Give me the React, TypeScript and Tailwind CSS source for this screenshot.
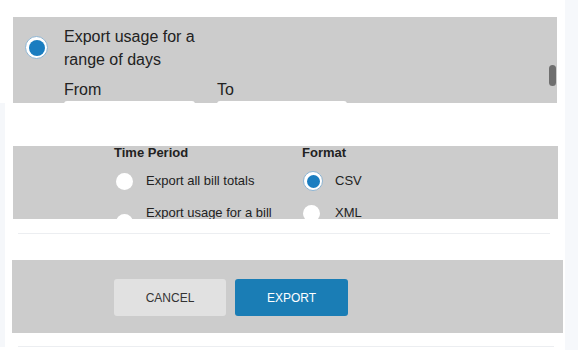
import React from "react";

function SelectedRadio({ size }: { size: "lg" | "sm" }) {
  return size === "lg" ? (
    <div className="w-[23px] h-[23px] shrink-0 rounded-full bg-white border border-[#8db4d2] flex items-center justify-center">
      <div className="w-[16px] h-[16px] rounded-full bg-[#1a7dc0]" />
    </div>
  ) : (
    <div className="w-[20px] h-[20px] shrink-0 rounded-full bg-white border border-[#8db4d2] flex items-center justify-center">
      <div className="w-[13px] h-[13px] rounded-full bg-[#1a7dc0]" />
    </div>
  );
}

function EmptyRadio() {
  return <div className="w-[17px] h-[17px] shrink-0 rounded-full bg-white" />;
}

export default function App() {
  return (
    <div
      className="w-[578px] h-[350px] bg-white flex overflow-hidden text-[#222]"
      style={{ fontFamily: '"Liberation Sans", Arial, sans-serif' }}
    >
      {/* left light strip */}
      <div className="w-[5px] flex flex-col">
        <div className="h-[103px]" />
        <div className="h-[244px] bg-[#f5f7fa]" />
      </div>

      {/* middle */}
      <div className="w-[560px] flex flex-col">
        {/* panel 1 */}
        <div className="pt-[17px]">
          <div className="ml-[8px] w-[544px] h-[86px] bg-[#cccccc] overflow-hidden flex relative">
            <div className="pl-[12px] pt-[19px]">
              <SelectedRadio size="lg" />
            </div>
            <div className="ml-[16px] flex flex-col">
              <div className="pt-[8px] text-[16px] leading-[23px]">
                <div>Export usage for a</div>
                <div>range of days</div>
              </div>
              <div className="mt-[8px] flex text-[16px] leading-[22px]">
                <div className="w-[153px]">From</div>
                <div>To</div>
              </div>
              <div className="flex gap-[22px]">
                <div className="w-[131px] h-[30px] bg-white rounded-[3px]" />
                <div className="w-[130px] h-[30px] bg-white rounded-[3px]" />
              </div>
            </div>
            <div className="absolute left-[536px] top-[48px] w-[7px] h-[21px] rounded-full bg-[#6f6f6f]" />
          </div>
        </div>

        {/* panel 2 */}
        <div className="mt-[43px] ml-[8px] w-[545px] h-[73px] bg-[#cccccc] overflow-hidden">
          <div className="ml-[101px] flex">
            <div className="w-[188px] flex flex-col">
              <div className="text-[13px] font-bold leading-[13px]">Time Period</div>
              <div className="mt-[12px] flex items-center h-[20px]">
                <div className="ml-[2px]"><EmptyRadio /></div>
                <div className="ml-[13px] text-[13px]">Export all bill totals</div>
              </div>
              <div className="mt-[12px] flex items-start">
                <div className="ml-[2px] mt-[11px]"><EmptyRadio /></div>
                <div className="ml-[13px] text-[13px] leading-[20px]">Export usage for a bill</div>
              </div>
            </div>
            <div className="flex flex-col">
              <div className="text-[13px] font-bold leading-[13px]">Format</div>
              <div className="mt-[12px] flex items-center h-[20px]">
                <div className="ml-[1px]"><SelectedRadio size="sm" /></div>
                <div className="ml-[12px] text-[13px]">CSV</div>
              </div>
              <div className="mt-[12px] flex items-center h-[20px]">
                <div className="ml-[1px]"><EmptyRadio /></div>
                <div className="ml-[15px] text-[13px]">XML</div>
              </div>
            </div>
          </div>
        </div>

        <div className="mt-[14px] ml-[13px] w-[532px] h-[1px] bg-[#eceef1]" />

        {/* panel 3 */}
        <div className="mt-[26px] ml-[7px] w-[551px] h-[73px] bg-[#cccccc] flex items-start">
          <div className="ml-[102px] mt-[19px] flex gap-[9px]">
            <button className="w-[112px] h-[37px] rounded-[3px] bg-[#e1e1e1] text-[12px] text-[#333] flex items-center justify-center">
              CANCEL
            </button>
            <button className="w-[113px] h-[37px] rounded-[3px] bg-[#1a7db5] text-[12px] text-white flex items-center justify-center">
              EXPORT
            </button>
          </div>
        </div>

        <div className="mt-[13px] ml-[13px] w-[536px] h-[1px] bg-[#eceef1]" />
      </div>

      {/* right light strip */}
      <div className="w-[13px] bg-[#f6f8fb]" />
    </div>
  );
}
